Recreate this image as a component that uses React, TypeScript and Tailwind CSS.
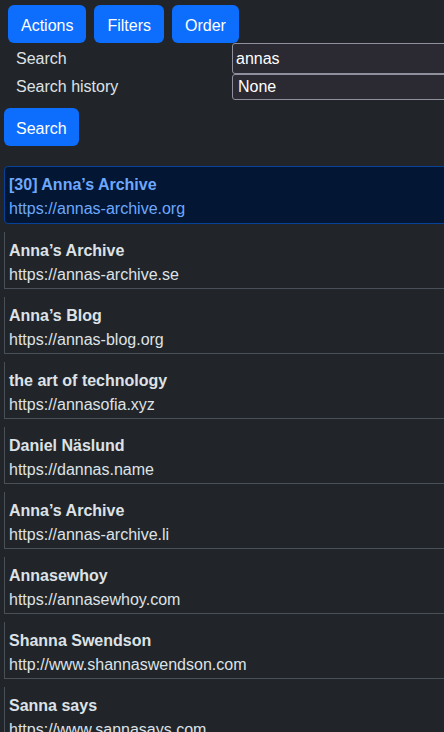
import React from "react";

const items = [
  { t: "Anna’s Archive", u: "https://annas-archive.se" },
  { t: "Anna’s Blog", u: "https://annas-blog.org" },
  { t: "the art of technology", u: "https://annasofia.xyz" },
  { t: "Daniel Näslund", u: "https://dannas.name" },
  { t: "Anna’s Archive", u: "https://annas-archive.li" },
  { t: "Annasewhoy", u: "https://annasewhoy.com" },
  { t: "Shanna Swendson", u: "http://www.shannaswendson.com" },
  { t: "Sanna says", u: "https://www.sannasays.com" },
];

export default function App() {
  return (
    <div
      className="w-[444px] h-[732px] overflow-hidden bg-[#212529] text-[#dee2e6] text-[16px] leading-[24px]"
      style={{ fontFamily: '"Liberation Sans", Arial, sans-serif' }}
    >
      <div className="flex gap-2 pl-2 pt-[5px]">
        {["Actions", "Filters", "Order"].map((b) => (
          <button
            key={b}
            className="bg-[#0d6efd] text-white rounded-[6px] px-[13px] pt-[9px] pb-[5px] leading-[24px]"
          >
            {b}
          </button>
        ))}
      </div>
      <div className="grid grid-cols-[228px_260px]">
        <div className="pl-4 flex items-center h-[31px]">Search</div>
        <div className="pl-1">
          <div className="h-[31px] bg-[#2b2a33] border border-[#8f8f9d] rounded-[3px] flex items-center pl-[3px] text-white">
            annas
          </div>
        </div>
        <div className="pl-4 flex items-center h-[26px]">Search history</div>
        <div className="pl-1">
          <div className="h-[26px] bg-[#2b2a33] border border-[#8f8f9d] rounded-[3px] flex items-center pl-[5px] text-white">
            None
          </div>
        </div>
      </div>
      <div className="pl-1 pt-2">
        <button className="bg-[#0d6efd] text-white rounded-[6px] px-3 pt-[9px] pb-[5px] leading-[24px]">
          Search
        </button>
      </div>
      <div className="pl-1 pt-5 w-[480px]">
        <div className="mb-2 border border-[#084298] bg-[#031633] rounded-[4px] pl-1 pt-[6px] pb-[2px] text-[#6ea8fe]">
          <div className="font-bold">[30] Anna’s Archive</div>
          <div>https://annas-archive.org</div>
        </div>
        {items.map((it, i) => (
          <div
            key={i}
            className="mb-2 border-l border-b border-[#495057] pl-1 pt-[7px] pb-[1px]"
          >
            <div className="font-bold">{it.t}</div>
            <div>{it.u}</div>
          </div>
        ))}
      </div>
    </div>
  );
}
